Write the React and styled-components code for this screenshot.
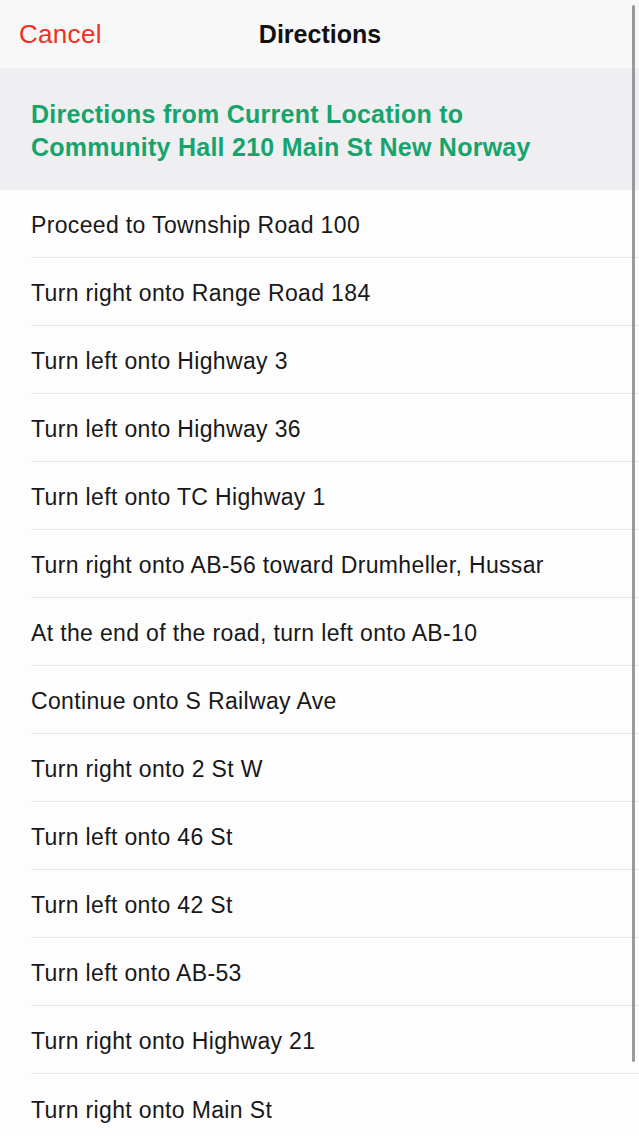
import styled, { createGlobalStyle } from "styled-components";

const steps = [
  "Proceed to Township Road 100",
  "Turn right onto Range Road 184",
  "Turn left onto Highway 3",
  "Turn left onto Highway 36",
  "Turn left onto TC Highway 1",
  "Turn right onto AB-56 toward Drumheller, Hussar",
  "At the end of the road, turn left onto AB-10",
  "Continue onto S Railway Ave",
  "Turn right onto 2 St W",
  "Turn left onto 46 St",
  "Turn left onto 42 St",
  "Turn left onto AB-53",
  "Turn right onto Highway 21",
  "Turn right onto Main St",
];

export default function App() {
  return (
    <>
      <GlobalStyle />
      <Screen>
        <NavBar>
          <CancelButton type="button">Cancel</CancelButton>
          <NavTitle>Directions</NavTitle>
        </NavBar>
        <Banner>
          Directions from Current Location to
          <br />
          Community Hall 210 Main St New Norway
        </Banner>
        <StepList>
          {steps.map((step, i) => (
            <StepRow key={i} $last={i === steps.length - 1}>
              {step}
            </StepRow>
          ))}
        </StepList>
        <ScrollIndicator />
      </Screen>
    </>
  );
}

const GlobalStyle = createGlobalStyle`
  html, body {
    margin: 0;
    padding: 0;
    background: #fdfdfd;
    font-family: "Liberation Sans", Arial, sans-serif;
  }
  * { box-sizing: border-box; }
`;

const Screen = styled.div`
  position: relative;
  width: 639px;
  height: 1136px;
  overflow: hidden;
  background: #fdfdfd;
  display: flex;
  flex-direction: column;
`;

const NavBar = styled.div`
  height: 68px;
  flex-shrink: 0;
  background: #f8f8f9;
  display: flex;
  align-items: center;
  justify-content: center;
  position: relative;
`;

const CancelButton = styled.button`
  position: absolute;
  left: 19px;
  top: 50%;
  transform: translateY(-50%);
  background: none;
  border: none;
  padding: 0;
  font-family: "Liberation Sans", Arial, sans-serif;
  font-size: 26px;
  letter-spacing: 0.3px;
  color: #f0301c;
`;

const NavTitle = styled.div`
  font-size: 25px;
  font-weight: 700;
  color: #111;
  margin-left: 1px;
`;

const Banner = styled.div`
  height: 122px;
  flex-shrink: 0;
  background: #efeff1;
  padding: 30px 0 0 31px;
  color: #16a46d;
  font-size: 25px;
  font-weight: 700;
  letter-spacing: 0.25px;
  line-height: 33px;
`;

const StepList = styled.div`
  display: flex;
  flex-direction: column;
`;

const StepRow = styled.div`
  height: 68px;
  flex-shrink: 0;
  margin-left: 31px;
  padding-top: 4px;
  display: flex;
  align-items: center;
  font-size: 23px;
  letter-spacing: 0.35px;
  color: #181818;
  border-bottom: ${(p) => (p.$last ? "none" : "1.5px solid #e6e6e8")};
`;

const ScrollIndicator = styled.div`
  position: absolute;
  top: 5px;
  right: 4px;
  width: 3px;
  height: 1057px;
  border-radius: 2px;
  background: #9a9a9c;
`;
